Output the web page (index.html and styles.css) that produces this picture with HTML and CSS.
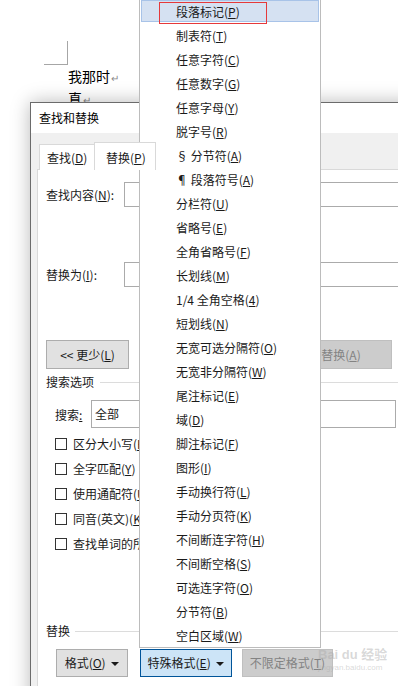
FILE: index.html
```html
<!DOCTYPE html>
<html>
<head>
  <meta charset="utf-8">
  <title>查找和替换</title>
  <link rel="stylesheet" href="styles.css">
</head>
<body>
  <div class="doc">
    <div class="corner"></div>
    <p class="line">我那时<span class="mark">↵</span></p>
    <p class="line">真<span class="mark">↵</span></p>
  </div>

  <div class="dialog">
    <div class="title">查找和替换</div>
    <div class="dialog-body">
      <div class="tabs">
        <div class="tab">查找(<u>D</u>)</div>
        <div class="tab active">替换(<u>P</u>)</div>
        <div class="tab">定位(<u>G</u>)</div>
      </div>
      <div class="panel">
        <div class="field first">
          <span class="label">查找内容(<u>N</u>):</span>
          <div class="input"></div>
        </div>
        <div class="field second">
          <span class="label">替换为(<u>I</u>):</span>
          <div class="input"></div>
        </div>

        <div class="button-row">
          <div class="btn more">&lt;&lt; 更少(<u>L</u>)</div>
          <div class="btn disabled replace-all">全部替换(<u>A</u>)</div>
        </div>

        <div class="section options-title">
          <span>搜索选项</span>
          <div class="rule"></div>
        </div>

        <div class="search-row">
          <span class="search-label">搜索<u>:</u></span>
          <div class="select">全部</div>
        </div>

        <div class="checks">
          <div class="check"><span class="box"></span>区分大小写(<u>H</u>)</div>
          <div class="check"><span class="box"></span>全字匹配(<u>Y</u>)</div>
          <div class="check"><span class="box"></span>使用通配符(<u>U</u>)</div>
          <div class="check"><span class="box"></span>同音(英文)(<u>K</u>)</div>
          <div class="check"><span class="box"></span>查找单词的所有形式(英文)(<u>W</u>)</div>
        </div>

        <div class="section replace-title">
          <span>替换</span>
          <div class="rule"></div>
        </div>

        <div class="bottom-row">
          <div class="btn format">格式(<u>O</u>) <span class="caret"></span></div>
          <div class="btn special">特殊格式(<u>E</u>) <span class="caret"></span></div>
          <div class="btn disabled noformat">不限定格式(<u>T</u>)</div>
        </div>
      </div>
    </div>
  </div>

  <div class="menu">
    <div class="item hover">段落标记(<u>P</u>)</div>
    <div class="item">制表符(<u>T</u>)</div>
    <div class="item">任意字符(<u>C</u>)</div>
    <div class="item">任意数字(<u>G</u>)</div>
    <div class="item">任意字母(<u>Y</u>)</div>
    <div class="item">脱字号(<u>R</u>)</div>
    <div class="item">§ 分节符(<u>A</u>)</div>
    <div class="item">¶ 段落符号(<u>A</u>)</div>
    <div class="item">分栏符(<u>U</u>)</div>
    <div class="item">省略号(<u>E</u>)</div>
    <div class="item">全角省略号(<u>F</u>)</div>
    <div class="item">长划线(<u>M</u>)</div>
    <div class="item">1/4 全角空格(<u>4</u>)</div>
    <div class="item">短划线(<u>N</u>)</div>
    <div class="item">无宽可选分隔符(<u>O</u>)</div>
    <div class="item">无宽非分隔符(<u>W</u>)</div>
    <div class="item">尾注标记(<u>E</u>)</div>
    <div class="item">域(<u>D</u>)</div>
    <div class="item">脚注标记(<u>F</u>)</div>
    <div class="item">图形(<u>I</u>)</div>
    <div class="item">手动换行符(<u>L</u>)</div>
    <div class="item">手动分页符(<u>K</u>)</div>
    <div class="item">不间断连字符(<u>H</u>)</div>
    <div class="item">不间断空格(<u>S</u>)</div>
    <div class="item">可选连字符(<u>O</u>)</div>
    <div class="item">分节符(<u>B</u>)</div>
    <div class="item">空白区域(<u>W</u>)</div>
  </div>

  <!-- annotation drawn over the screenshot -->
  <div class="red-box"></div>

  <div class="watermark">
    <div class="wm-main">Bai du 经验</div>
    <div class="wm-sub">jingyan.baidu.com</div>
  </div>
</body>
</html>
```

FILE: styles.css
```css
html, body {
  margin: 0;
  padding: 0;
}
body {
  width: 398px;
  height: 686px;
  overflow: hidden;
  position: relative;
  background: #fff;
  font-family: "Noto Sans CJK SC", "Microsoft YaHei", sans-serif;
  font-size: 12px;
  color: #1a1a1a;
}
u {
  text-decoration: underline;
  text-underline-offset: 1px;
}

/* document behind the dialog */
.doc {
  padding: 41px 0 0 44px;
}
.corner {
  width: 23px;
  height: 23px;
  border-right: 1px solid #a6a6a6;
  border-bottom: 1px solid #a6a6a6;
}
.line {
  margin: 0;
  padding-left: 24px;
  font-size: 14px;
  line-height: 21px;
  color: #000;
}
.line:first-of-type {
  margin-top: 1px;
}
.mark {
  font-size: 10px;
  color: #8a8a8a;
  margin-left: 1px;
}

/* dialog window */
.dialog {
  position: absolute;
  left: 30px;
  top: 102px;
  width: 470px;
  height: 640px;
  border: 1px solid #6b6b6b;
  background: #f0f0f0;
  box-shadow: 0 0 18px rgba(0, 0, 0, 0.28);
}
.title {
  height: 30px;
  line-height: 30px;
  padding-left: 8px;
  background: #fff;
  color: #000;
}
.dialog-body {
  padding: 9px 0 0 6px;
}
.tabs {
  display: flex;
  align-items: flex-end;
  height: 28px;
  margin-left: 2px;
  margin-bottom: -1px;
}
.tab {
  box-sizing: border-box;
  flex-shrink: 0;
  width: 56px;
  height: 26px;
  line-height: 26px;
  padding-left: 7px;
  background: #fff;
  border: 1px solid #d9d9d9;
  border-bottom: none;
  white-space: nowrap;
  color: #1a1a1a;
}
.tab.active {
  position: relative;
  z-index: 1;
  width: 62px;
  height: 28px;
  line-height: 30px;
  padding-left: 11px;
  margin-left: -1px;
}
.tab.active + .tab {
  margin-left: -1px;
}
.panel {
  background: #fff;
  border-top: 1px solid #d9d9d9;
  border-left: 1px solid #d9d9d9;
  height: 600px;
  padding-left: 8px;
}

.field {
  display: flex;
  align-items: center;
}
.field.first {
  margin-top: 12px;
}
.field.second {
  margin-top: 55px;
}
.label {
  flex-shrink: 0;
  width: 78px;
  line-height: 25px;
  white-space: nowrap;
}
.input {
  flex-shrink: 0;
  width: 400px;
  height: 23px;
  border: 1px solid #ababab;
  background: #fff;
}

.btn {
  box-sizing: border-box;
  flex-shrink: 0;
  height: 29px;
  line-height: 27px;
  text-align: center;
  background: #e1e1e1;
  border: 1px solid #adadad;
  color: #1a1a1a;
  white-space: nowrap;
}
.btn.disabled {
  background: #cccccc;
  border-color: #bfbfbf;
  color: #838383;
}
.button-row {
  display: flex;
  margin-top: 53px;
}
.more {
  width: 83px;
}
.replace-all {
  width: 126px;
  margin-left: 137px;
}

.section {
  display: flex;
  align-items: center;
  height: 16px;
  line-height: 16px;
  white-space: nowrap;
}
.rule {
  flex: 1;
  height: 1px;
  background: #dcdcdc;
  margin-left: 6px;
}
.options-title {
  margin-top: 5px;
}
.replace-title {
  margin-top: 67px;
}
.replace-title .rule {
  margin-left: 5px;
}

.search-row {
  display: flex;
  align-items: center;
  margin-top: 10px;
  padding-left: 9px;
}
.search-label {
  flex-shrink: 0;
  width: 36px;
  white-space: nowrap;
}
.select {
  flex-shrink: 0;
  width: 300px;
  height: 26px;
  line-height: 26px;
  padding-left: 3px;
  border: 1px solid #ababab;
}

.checks {
  margin-top: 3px;
  padding-left: 9px;
}
.check {
  display: flex;
  align-items: center;
  height: 25px;
  white-space: nowrap;
}
.box {
  box-sizing: border-box;
  flex-shrink: 0;
  width: 12px;
  height: 12px;
  border: 1px solid #333;
  background: #fff;
  margin-right: 6px;
}

.bottom-row {
  display: flex;
  margin-top: 10px;
  padding-left: 10px;
}
.bottom-row .btn {
  height: 28px;
  line-height: 26px;
}
.format {
  width: 72px;
}
.special {
  width: 92px;
  margin-left: 12px;
  background: #cce4f7;
  border-color: #005499;
}
.noformat {
  width: 91px;
  margin-left: 10px;
}
.caret {
  display: inline-block;
  width: 0;
  height: 0;
  margin-left: 3px;
  vertical-align: 2px;
  border-left: 4px solid transparent;
  border-right: 4px solid transparent;
  border-top: 4px solid #1a1a1a;
}

/* drop-down menu opened from 特殊格式 */
.menu {
  position: absolute;
  left: 139px;
  top: 0;
  width: 180px;
  height: 647px;
  background: #fff;
  border: 1px solid #bcbcbc;
  border-top: none;
}
.item {
  box-sizing: border-box;
  height: 22px;
  line-height: 21px;
  margin: 0 1px 2px 1px;
  padding-left: 34px;
  border: 1px solid transparent;
  color: #1a1a1a;
  white-space: nowrap;
}
.item.hover {
  background: #d5e1f2;
  border-color: #a8c3e8;
}

.red-box {
  position: absolute;
  left: 159px;
  top: 2px;
  width: 106px;
  height: 20px;
  border: 1px solid #e5393b;
}

.watermark {
  position: absolute;
  left: 318px;
  top: 646px;
  color: rgba(170, 170, 170, 0.45);
  font-family: "Liberation Sans", "Noto Sans CJK SC", sans-serif;
}
.wm-main {
  font-size: 13px;
  font-weight: bold;
  line-height: 17px;
  white-space: nowrap;
}
.wm-sub {
  font-size: 8px;
  line-height: 10px;
  white-space: nowrap;
}
```
